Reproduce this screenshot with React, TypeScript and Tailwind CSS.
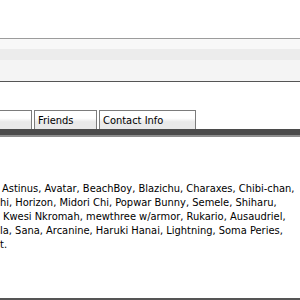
const names = [
  { text: "Astinus, Avatar, BeachBoy, Blazichu, Charaxes, Chibi-chan,", pad: "pl-[2px]" },
  { text: "hi, Horizon, Midori Chi, Popwar Bunny, Semele, Shiharu,", pad: "pl-0" },
  { text: "Kwesi Nkromah, mewthree w/armor, Rukario, Ausaudriel,", pad: "pl-[3px]" },
  { text: "la, Sana, Arcanine, Haruki Hanai, Lightning, Soma Peries,", pad: "pl-0" },
  { text: "t.", pad: "pl-0" },
];

const Tab = ({ label, className }: { label?: string; className: string }) => (
  <div
    className={`h-[19px] shrink-0 border border-b-0 border-[#7c7c7c] bg-gradient-to-b from-white from-40% to-[#e9e9e9] to-60% pl-[3px] pt-[3px] text-[11px] leading-[14px] text-black ${className}`}
  >
    {label}
  </div>
);

export default function App() {
  return (
    <div className="flex h-[300px] w-[300px] flex-col overflow-hidden bg-white font-['DejaVu_Sans_Condensed',sans-serif] text-black">
      <div className="h-[38px] shrink-0" />

      {/* header strip */}
      <div className="flex shrink-0 flex-col border-t border-b border-t-[#9c9c9c] border-b-[#555]">
        <div className="h-[10px] bg-[#f8f8f8]" />
        <div className="h-[11px] bg-[#ececec]" />
        <div className="h-[21px] bg-[#f4f4f4]" />
      </div>

      <div className="h-[28px] shrink-0" />

      {/* tabs */}
      <div className="flex shrink-0 items-end gap-[2px]">
        <Tab className="-ml-[20px] w-[52px]" />
        <Tab label="Friends" className="w-[63px]" />
        <Tab label="Contact Info" className="w-[97px]" />
      </div>
      <div className="h-[8px] shrink-0 border-b-2 border-[#8d8d8d] bg-[#4b4b4b]" />

      <div className="h-[45px] shrink-0" />

      <div className="flex shrink-0 flex-col text-[11px] leading-[14px]">
        {names.map((n) => (
          <div key={n.text} className={`whitespace-nowrap ${n.pad}`}>
            {n.text}
          </div>
        ))}
      </div>

      <div className="flex-1" />
      <div className="h-[2px] shrink-0 bg-[#555]" />
    </div>
  );
}
